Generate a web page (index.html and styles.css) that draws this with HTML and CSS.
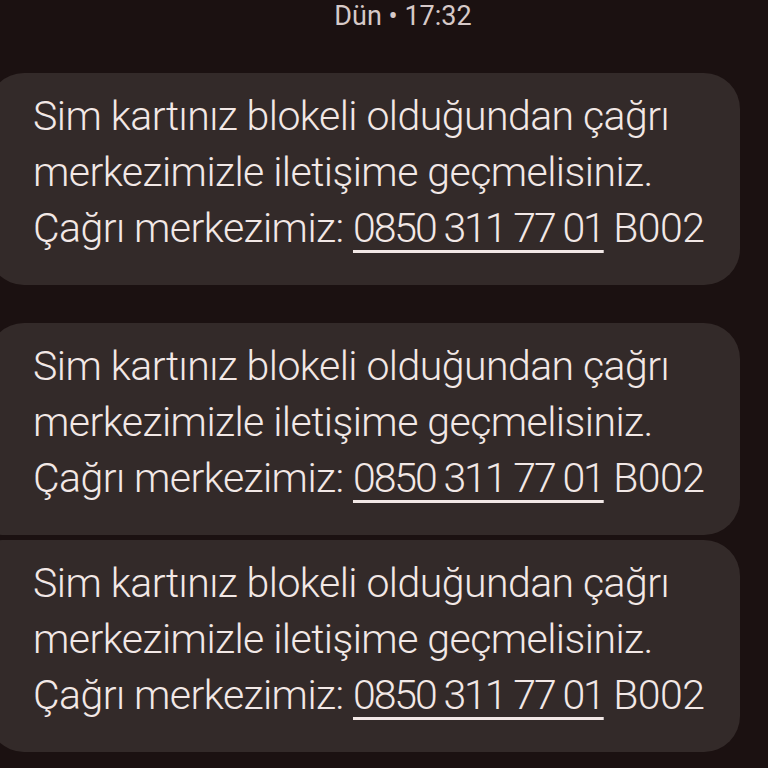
FILE: index.html
```html
<!DOCTYPE html>
<html lang="tr">
<head>
<meta charset="utf-8">
<link rel="stylesheet" href="styles.css">
</head>
<body>
<div class="screen">
  <div class="stamp">Dün • 17:32</div>
  <div class="thread">
    <div class="bubble first">
      <p>Sim kartınız blokeli olduğundan çağrı<br>merkezimizle iletişime geçmelisiniz.<br>Çağrı merkezimiz: <span class="link">0850 311 77 01</span> B002</p>
    </div>
    <div class="bubble second">
      <p>Sim kartınız blokeli olduğundan çağrı<br>merkezimizle iletişime geçmelisiniz.<br>Çağrı merkezimiz: <span class="link">0850 311 77 01</span> B002</p>
    </div>
    <div class="bubble third">
      <p>Sim kartınız blokeli olduğundan çağrı<br>merkezimizle iletişime geçmelisiniz.<br>Çağrı merkezimiz: <span class="link">0850 311 77 01</span> B002</p>
    </div>
  </div>
</div>
</body>
</html>
```
FILE: styles.css
```css
html, body {
  margin: 0;
  padding: 0;
  background: #1b1111;
}
.screen {
  width: 768px;
  height: 768px;
  overflow: hidden;
  background: #1b1111;
  font-family: Roboto, "Noto Sans", sans-serif;
  color: #f2e8e6;
}
.stamp {
  text-align: center;
  padding-left: 38px;
  font-size: 27px;
  line-height: 32px;
  color: #d6c9c8;
  height: 32px;
}
.thread {
  display: flex;
  flex-direction: column;
  margin-top: 41px;
  margin-left: -12px;
  width: 752px;
}
.bubble {
  background: #332a29;
  border-radius: 36px;
  padding: 15px 0 14px 45px;
  height: 212px;
  box-sizing: border-box;
}
.bubble p {
  margin: 0;
  font-size: 41px;
  font-weight: 300;
  line-height: 56px;
  letter-spacing: -0.55px;
}
.second {
  margin-top: 38px;
  height: 212px;
  border-bottom-left-radius: 14px;
}
.third {
  margin-top: 5px;
  border-top-left-radius: 14px;
}
.link {
  letter-spacing: -2.1px;
  text-decoration: underline;
  text-decoration-thickness: 3px;
  text-underline-offset: 8px;
}
```
